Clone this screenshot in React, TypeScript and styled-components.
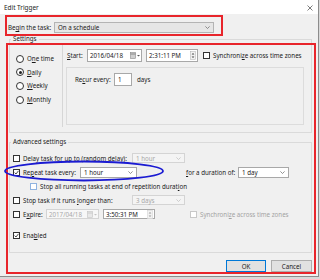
import styled, { createGlobalStyle } from "styled-components";

const GlobalStyle = createGlobalStyle`
  html, body {
    margin: 0;
    padding: 0;
    background: #d9d9d9;
  }
  body {
    font-family: "Noto Sans", "Open Sans", sans-serif;
    font-size: 6.2px;
    color: #1a1a1a;
  }
`;

const Window = styled.div`
  position: relative;
  width: 318px;
  height: 276px;
  background: #f0f0f0;
  border-right: 1px solid #8c8c8c;
  border-bottom: 1px solid #8c8c8c;
  overflow: hidden;
`;

const TitleBar = styled.div`
  height: 14px;
  background: #ffffff;
  display: flex;
  align-items: center;
  justify-content: space-between;
  padding: 1px 5px 0 4px;
  box-sizing: border-box;
  font-size: 6.4px;
  color: #222;
`;

const BeginRow = styled.div`
  display: flex;
  align-items: center;
  margin-top: 8px;
  padding-left: 8px;
  height: 11px;
`;

const Label = styled.span<{ $w?: number; $disabled?: boolean }>`
  display: inline-block;
  width: ${(p) => (p.$w ? `${p.$w}px` : "auto")};
  white-space: nowrap;
  color: ${(p) => (p.$disabled ? "#a3a3a3" : "#1a1a1a")};
  flex-shrink: 0;
`;

const Key = styled.span`
  text-decoration: underline;
  text-underline-offset: 1px;
  text-decoration-thickness: 0.5px;
`;

const Combo = styled.div<{ $w: number; $h?: number; $variant?: "gray" | "white" | "disabled" }>`
  width: ${(p) => p.$w}px;
  height: ${(p) => p.$h ?? 11}px;
  box-sizing: border-box;
  flex-shrink: 0;
  display: flex;
  align-items: center;
  justify-content: space-between;
  padding: 0 3px 0 3px;
  background: ${(p) =>
    p.$variant === "gray" ? "#e6e6e6" : p.$variant === "disabled" ? "#f4f4f4" : "#ffffff"};
  border: 1px solid
    ${(p) => (p.$variant === "disabled" ? "#d4d4d4" : p.$variant === "gray" ? "#b4b4b4" : "#a8a8a8")};
  color: ${(p) => (p.$variant === "disabled" ? "#a8a8a8" : "#1a1a1a")};
  white-space: nowrap;
`;

const Field = styled.fieldset<{ $pb?: number }>`
  margin: 0 6px 0 9px;
  padding: 0 0 ${(p) => p.$pb ?? 0}px 0;
  border: 1px solid #dadada;
  min-width: 0;
`;

const Legend = styled.legend`
  padding: 0 2px;
  margin-left: 1px;
  line-height: 8px;
  font-size: 6.2px;
`;

const SettingsField = styled(Field)`
  margin-top: 2px;
`;

const AdvancedField = styled(Field)`
  margin-top: 5px;
`;

const SettingsBody = styled.div`
  display: flex;
  height: 89px;
`;

const RadioCol = styled.div`
  width: 53px;
  margin: 2px 0 5px;
  border-right: 1px solid #d6d6d6;
  padding: 7px 0 0 6px;
  box-sizing: border-box;
  display: flex;
  flex-direction: column;
`;

const RadioRow = styled.div`
  display: flex;
  align-items: center;
  gap: 3px;
  height: 13.6px;
`;

const Radio = styled.span<{ $on?: boolean }>`
  width: 6px;
  height: 6px;
  border-radius: 50%;
  border: 1px solid #333;
  background: #fff;
  position: relative;
  flex-shrink: 0;
  &::after {
    content: "";
    display: ${(p) => (p.$on ? "block" : "none")};
    position: absolute;
    left: 1.5px;
    top: 1.5px;
    width: 3px;
    height: 3px;
    border-radius: 50%;
    background: #222;
  }
`;

const RightPanel = styled.div`
  flex: 1;
  padding-left: 3px;
  display: flex;
  flex-direction: column;
`;

const StartRow = styled.div`
  display: flex;
  align-items: center;
  margin: 6px 0 0 1px;
  height: 13px;
`;

const RecurBox = styled.div`
  margin-top: 5px;
  width: 238px;
  height: 58px;
  box-sizing: border-box;
  border: 1px solid #dcdcdc;
  padding: 5px 0 0 8px;
`;

const RecurRow = styled.div`
  display: flex;
  align-items: center;
  height: 13px;
`;

const NumBox = styled.div`
  width: 18px;
  height: 13px;
  box-sizing: border-box;
  border: 1px solid #a8a8a8;
  background: #fff;
  padding-left: 3px;
  display: flex;
  align-items: center;
  margin-right: 5px;
`;

const Boxed = styled.div<{ $w: number; $disabled?: boolean; $ml?: number }>`
  width: ${(p) => p.$w}px;
  height: 100%;
  margin-left: ${(p) => p.$ml ?? 0}px;
  box-sizing: border-box;
  border: 1px solid ${(p) => (p.$disabled ? "#d4d4d4" : "#a8a8a8")};
  background: ${(p) => (p.$disabled ? "#f7f7f7" : "#fff")};
  color: ${(p) => (p.$disabled ? "#a8a8a8" : "#1a1a1a")};
  display: flex;
  align-items: center;
  justify-content: space-between;
  padding: 0 1px 0 2px;
  flex-shrink: 0;
  white-space: nowrap;
`;

const Check = styled.span<{ $on?: boolean; $tone?: "normal" | "blue" | "disabled" }>`
  width: 7px;
  height: 7px;
  box-sizing: border-box;
  flex-shrink: 0;
  border: 1px solid
    ${(p) => (p.$tone === "blue" ? "#8fb3e0" : p.$tone === "disabled" ? "#c8c8c8" : "#333")};
  background: #fff;
  display: flex;
  align-items: center;
  justify-content: center;
`;

const AdvBody = styled.div`
  padding: 5px 0 0 3px;
  display: flex;
  flex-direction: column;
`;

const AdvRow = styled.div<{ $indent?: number; $mt?: number }>`
  display: flex;
  align-items: center;
  height: 14px;
  padding-left: ${(p) => p.$indent ?? 0}px;
  margin-top: ${(p) => p.$mt ?? 0}px;
`;

const CheckLabel = styled.div<{ $w?: number }>`
  display: flex;
  align-items: center;
  gap: 3px;
  width: ${(p) => (p.$w ? `${p.$w}px` : "auto")};
  flex-shrink: 0;
  white-space: nowrap;
`;

const Buttons = styled.div`
  display: flex;
  justify-content: flex-end;
  gap: 5px;
  margin-top: 7px;
  padding-right: 6px;
`;

const Button = styled.div<{ $primary?: boolean; $w: number }>`
  width: ${(p) => p.$w}px;
  height: 12px;
  box-sizing: border-box;
  background: #e1e1e1;
  border: 1px solid ${(p) => (p.$primary ? "#0078d7" : "#adadad")};
  display: flex;
  align-items: center;
  justify-content: center;
`;

const Mark = styled.div<{ $l: number; $t: number; $w: number; $h: number }>`
  position: absolute;
  left: ${(p) => p.$l}px;
  top: ${(p) => p.$t}px;
  width: ${(p) => p.$w}px;
  height: ${(p) => p.$h}px;
  box-sizing: border-box;
  border: 2px solid #e8252b;
  pointer-events: none;
`;

const Ellipse = styled.svg`
  position: absolute;
  left: 3px;
  top: 160px;
  pointer-events: none;
`;

const Chevron = ({ color = "#666" }: { color?: string }) => (
  <svg width="5" height="3" viewBox="0 0 5 3">
    <path d="M0.4 0.4 L2.5 2.5 L4.6 0.4" fill="none" stroke={color} strokeWidth="0.7" />
  </svg>
);

const Tick = () => (
  <svg width="5" height="5" viewBox="0 0 5 5">
    <path d="M0.6 2.6 L2 4 L4.5 0.8" fill="none" stroke="#222" strokeWidth="0.8" />
  </svg>
);

const CalendarIcon = ({ faded }: { faded?: boolean }) => (
  <svg width="10" height="7" viewBox="0 0 10 7">
    <rect x="0.5" y="0.5" width="5" height="6" fill={faded ? "#e8e8e8" : "#cfcfcf"} stroke={faded ? "#c4c4c4" : "#8a8a8a"} strokeWidth="0.6" />
    <line x1="0.5" y1="2" x2="5.5" y2="2" stroke={faded ? "#c4c4c4" : "#777"} strokeWidth="0.8" />
    <path d="M7 3 L8.5 4.5 L10 3 Z" fill={faded ? "#c4c4c4" : "#555"} />
  </svg>
);

const Spinner = ({ faded }: { faded?: boolean }) => (
  <svg width="6" height="9" viewBox="0 0 6 9">
    <rect x="0.3" y="0.3" width="5.4" height="8.4" fill="#f2f2f2" stroke={faded ? "#d0d0d0" : "#b0b0b0"} strokeWidth="0.5" />
    <path d="M1.6 3.5 L3 2 L4.4 3.5 Z" fill={faded ? "#999" : "#444"} />
    <path d="M1.6 5.5 L3 7 L4.4 5.5 Z" fill={faded ? "#999" : "#444"} />
  </svg>
);

const CloseIcon = () => (
  <svg width="6" height="6" viewBox="0 0 6 6">
    <path d="M0.5 0.5 L5.5 5.5 M5.5 0.5 L0.5 5.5" stroke="#444" strokeWidth="0.7" />
  </svg>
);

export default function App() {
  return (
    <>
      <GlobalStyle />
      <Window>
        <TitleBar>
          <span>Edit Trigger</span>
          <CloseIcon />
        </TitleBar>

        <BeginRow>
          <Label $w={46}>
            Be<Key>g</Key>in the task:
          </Label>
          <Combo $w={160} $variant="gray">
            <span>On a schedule</span>
            <Chevron />
          </Combo>
        </BeginRow>

        <SettingsField>
          <Legend>Settings</Legend>
          <SettingsBody>
            <RadioCol>
              <RadioRow>
                <Radio />
                <span>
                  O<Key>n</Key>e time
                </span>
              </RadioRow>
              <RadioRow>
                <Radio $on />
                <span>
                  <Key>D</Key>aily
                </span>
              </RadioRow>
              <RadioRow>
                <Radio />
                <span>
                  <Key>W</Key>eekly
                </span>
              </RadioRow>
              <RadioRow>
                <Radio />
                <span>
                  <Key>M</Key>onthly
                </span>
              </RadioRow>
            </RadioCol>
            <RightPanel>
              <StartRow>
                <Label $w={20}>
                  <Key>S</Key>tart:
                </Label>
                <Boxed $w={55}>
                  <span>2016/04/18</span>
                  <CalendarIcon />
                </Boxed>
                <Boxed $w={52} $ml={4}>
                  <span>2:31:11 PM</span>
                  <Spinner />
                </Boxed>
                <CheckLabel style={{ marginLeft: 5 }}>
                  <Check $tone="normal" />
                  <span>
                    Synchroni<Key>z</Key>e across time zones
                  </span>
                </CheckLabel>
              </StartRow>
              <RecurBox>
                <RecurRow>
                  <Label $w={39}>
                    Re<Key>c</Key>ur every:
                  </Label>
                  <NumBox>1</NumBox>
                  <Label>days</Label>
                </RecurRow>
              </RecurBox>
            </RightPanel>
          </SettingsBody>
        </SettingsField>

        <AdvancedField $pb={10}>
          <Legend>Advanced settings</Legend>
          <AdvBody>
            <AdvRow>
              <CheckLabel $w={119}>
                <Check />
                <span>Delay task for up to (random delay):</span>
              </CheckLabel>
              <Combo $w={53} $h={10} $variant="disabled">
                <span>1 hour</span>
                <Chevron color="#bbb" />
              </Combo>
            </AdvRow>
            <AdvRow>
              <CheckLabel $w={67}>
                <Check $on>
                  <Tick />
                </Check>
                <span>
                  Re<Key>p</Key>eat task every:
                </span>
              </CheckLabel>
              <Combo $w={57} $h={11} $variant="white">
                <span>1 hour</span>
                <Chevron />
              </Combo>
              <Label $w={52} style={{ marginLeft: 49 }}>
                <Key>f</Key>or a duration of:
              </Label>
              <Combo $w={51} $h={11} $variant="white">
                <span>1 day</span>
                <Chevron />
              </Combo>
            </AdvRow>
            <AdvRow $indent={17}>
              <CheckLabel>
                <Check $tone="blue" />
                <span>
                  Stop all running tasks at end of repetition durat<Key>i</Key>on
                </span>
              </CheckLabel>
            </AdvRow>
            <AdvRow>
              <CheckLabel $w={119}>
                <Check />
                <span>
                  Stop task if it runs <Key>l</Key>onger than:
                </span>
              </CheckLabel>
              <Combo $w={53} $h={10} $variant="disabled">
                <span>3 days</span>
                <Chevron color="#bbb" />
              </Combo>
            </AdvRow>
            <AdvRow>
              <CheckLabel $w={33}>
                <Check />
                <span>
                  E<Key>x</Key>pire:
                </span>
              </CheckLabel>
              <div style={{ display: "flex", height: 10 }}>
                <Boxed $w={53} $disabled>
                  <span>2017/04/18</span>
                  <CalendarIcon faded />
                </Boxed>
                <Boxed $w={52} $ml={4}>
                  <span>3:50:31 PM</span>
                  <Spinner faded />
                </Boxed>
              </div>
              <CheckLabel style={{ marginLeft: 35 }}>
                <Check $tone="disabled" />
                <Label $disabled>
                  Synchroni<Key>z</Key>e across time zones
                </Label>
              </CheckLabel>
            </AdvRow>
            <AdvRow $mt={7}>
              <CheckLabel>
                <Check $on>
                  <Tick />
                </Check>
                <span>
                  Ena<Key>b</Key>led
                </span>
              </CheckLabel>
            </AdvRow>
          </AdvBody>
        </AdvancedField>

        <Buttons>
          <Button $primary $w={40}>
            OK
          </Button>
          <Button $w={41}>Cancel</Button>
        </Buttons>

        <Mark $l={5} $t={15} $w={218} $h={21} />
        <Mark $l={6} $t={43} $w={310} $h={231} />
        <Ellipse width="164" height="24" viewBox="0 0 164 24">
          <ellipse cx="81" cy="11" rx="79" ry="9.5" fill="none" stroke="#1b1bd2" strokeWidth="1.8" />
        </Ellipse>
      </Window>
    </>
  );
}
